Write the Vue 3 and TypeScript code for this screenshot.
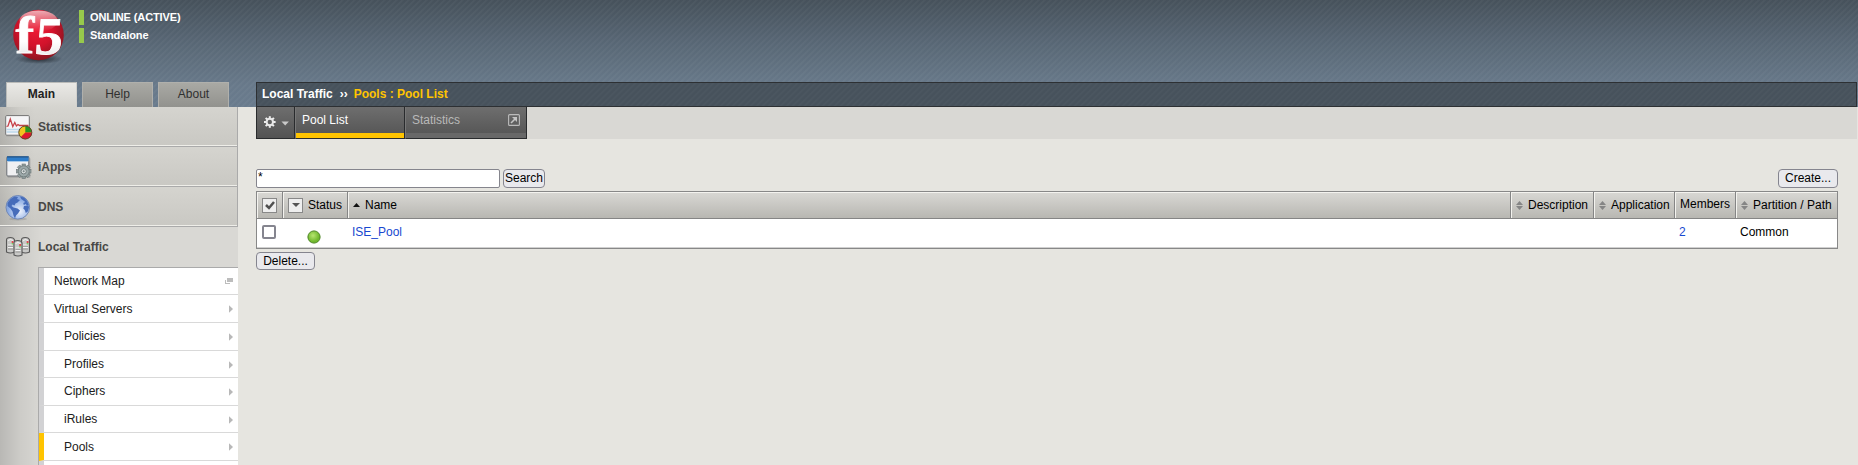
<script setup lang="ts">
interface SubItem { label: string; nested?: boolean; external?: boolean; active?: boolean; raised?: boolean; height: number }

const tabs: string[] = ['Main', 'Help', 'About']
const sections: string[] = ['Statistics', 'iApps', 'DNS', 'Local Traffic']
const subItems: SubItem[] = [
  { label: 'Network Map', external: true, height: 27 },
  { label: 'Virtual Servers', height: 28 },
  { label: 'Policies', nested: true, raised: true, height: 28 },
  { label: 'Profiles', nested: true, height: 27 },
  { label: 'Ciphers', nested: true, raised: true, height: 28 },
  { label: 'iRules', nested: true, height: 27 },
  { label: 'Pools', nested: true, active: true, height: 28 },
  { label: '', height: 28 },
]
const servers = [{ x: 1, y: 1 }, { x: 16, y: 1 }, { x: 8.5, y: 4 }]
const teeth: number[] = [0, 45, 90, 135, 180, 225, 270, 315]
</script>

<template>
  <div class="page">
    <header class="masthead">
      <svg class="logo" width="60" height="60" viewBox="0 0 60 60">
        <defs>
          <radialGradient id="ball" cx="45%" cy="38%" r="62%">
            <stop offset="0" stop-color="#ee1c35" />
            <stop offset=".55" stop-color="#d2122b" />
            <stop offset="1" stop-color="#8d1520" />
          </radialGradient>
          <linearGradient id="shine" x1="0" y1="0" x2="0" y2="1">
            <stop offset="0" stop-color="#fff" stop-opacity=".65" />
            <stop offset="1" stop-color="#fff" stop-opacity="0" />
          </linearGradient>
          <radialGradient id="shade">
            <stop offset="0" stop-color="#20262d" stop-opacity=".9" />
            <stop offset="1" stop-color="#20262d" stop-opacity="0" />
          </radialGradient>
          <linearGradient id="glyph" x1="0" y1="0" x2="0" y2="1">
            <stop offset="0" stop-color="#fff" />
            <stop offset=".6" stop-color="#fff" />
            <stop offset="1" stop-color="#ddd" />
          </linearGradient>
        </defs>
        <ellipse cx="31" cy="54" rx="24" ry="5" fill="url(#shade)" />
        <circle cx="30.5" cy="30" r="25.3" fill="url(#ball)" />
        <ellipse cx="30.5" cy="16" rx="19" ry="10.5" fill="url(#shine)" />
        <text class="logo-glyph" transform="translate(7.5 48) scale(1.08 1)" font-size="52">f</text>
        <text class="logo-glyph" transform="translate(26 48.5) skewX(-5) scale(1.04 1)" font-size="53">5</text>
      </svg>
      <div class="device">
        <div class="state online">ONLINE (ACTIVE)</div>
        <div class="state">Standalone</div>
      </div>
    </header>

    <nav class="tabs">
      <div v-for="(tab, i) in tabs" :key="tab" class="tab" :class="{ current: i === 0 }">{{ tab }}</div>
    </nav>

    <div class="crumbs"><span>Local Traffic</span><span class="sep">››</span><span class="here">Pools : Pool List</span></div>

    <aside class="sidebar">
      <div v-for="(section, i) in sections" :key="section" class="section" :class="{ open: i === 3 }">
        <svg class="section-icon" width="28" height="28" viewBox="0 0 28 28">
          <g v-if="i === 0">
            <rect x="1" y="3" width="24" height="20" rx="1" fill="#a5a5a3" opacity=".5" />
            <rect x=".7" y="1.6" width="23.6" height="19.6" rx="1" fill="#f5f5f7" stroke="#737373" />
            <path d="M1.5 15.5h22M1.5 18h22" stroke="#bcd8ec" stroke-width="1.5" />
            <path d="M1.5 12.5l1.5-.5 2.3-7 2.5 7.5 2-4 1.6 3.5 1.6-1.5 1.5 1h9" fill="none" stroke="#c64149" stroke-width="1.3" />
            <circle cx="20.3" cy="18.5" r="6.7" fill="#f0c420" />
            <path d="M20.3 18.5v-6.7a6.7 6.7 0 0 1 6.7 6.7z" fill="#279521" />
            <path d="M20.3 18.5h6.7a6.7 6.7 0 0 1-11.4 4.7z" fill="#dc1830" />
            <circle cx="20.3" cy="18.5" r="6.5" fill="none" stroke="#5e4931" />
          </g>
          <g v-else-if="i === 1">
            <rect x="2.5" y="4" width="23" height="20" rx="1" fill="#999" opacity=".5" />
            <rect x="1.8" y="2.5" width="22" height="19.5" rx="1" fill="#f0f0f2" stroke="#686d72" />
            <rect x="2" y="2.5" width="21.6" height="4.5" fill="#2e7dca" />
            <path d="M2 3h21.6" stroke="#225384" />
            <path d="M2.5 7.5h20.5" stroke="#a8c9e9" />
            <rect v-for="angle in teeth" :key="angle" x="17" y="10" width="3.4" height="4" fill="#929e9f" stroke="#6a7576" stroke-width=".6" :transform="`rotate(${angle} 18.7 17.3)`" />
            <circle cx="18.7" cy="17.3" r="5.5" fill="#9ca8a9" stroke="#6a7576" stroke-width=".7" />
            <circle cx="18.7" cy="17.3" r="2.6" fill="#d8dddd" stroke="#647071" stroke-width=".8" />
            <circle cx="18.7" cy="17.3" r="1" fill="#7b8788" />
          </g>
          <g v-else-if="i === 2">
            <defs><radialGradient id="globe" cx="58%" cy="66%"><stop offset="0" stop-color="#f0f4fc" /><stop offset="1" stop-color="#88a9e3" /></radialGradient></defs>
            <ellipse cx="13" cy="25" rx="9" ry="1.5" fill="#777" opacity=".3" />
            <circle cx="12.8" cy="13.3" r="11.8" fill="url(#globe)" stroke="#7288b4" />
            <path d="M2.5 9l3-4 4-2.5 3.5.5-1 2 3 1-2.5 2.5-2 1-1 2-2-1-1 1.5 2 1.5 4 1 2.5 2-2 3-2 2-1 3-1.5-3-1-4-2-3-3-2.5zM15 2.5l4 1 3 3.5 1.8 4-2 .5-1-1.5-2 1-.5-2 2-1-2-1.5-2-1.5zM19 12l4.5-.5.5 2-1.2 4-2 1.5-1-3-1.5-1.5z" fill="#466cba" />
          </g>
          <g v-else>
            <g v-for="s in servers" :key="s.x" :transform="`translate(${s.x} ${s.y + 2})`">
              <path d="M.5 3Q.5.5 4.2.5T8.5 3v12Q4.5 17 .5 15z" fill="#c9c9c7" stroke="#575757" stroke-width="1.1" />
              <path d="M2 3.5Q4.5 1.6 7 3.5M2 8h5M2 10.5h5" fill="none" stroke="#f5f5f5" />
              <path d="M2 9.3h5M2 12h5" stroke="#858585" stroke-width=".7" />
              <rect x="5.7" y="4.2" width="1.8" height="1.6" fill="#e52832" />
              <rect x="5.7" y="6.2" width="1.6" height="1.2" fill="#65cc4a" />
            </g>
          </g>
        </svg>
        <span>{{ section }}</span>
      </div>
      <div class="submenu">
        <div v-for="(item, i) in subItems" :key="i" class="subitem" :class="{ nested: item.nested, active: item.active, raised: item.raised }" :style="{ height: item.height + 'px' }">
          <span>{{ item.label }}</span>
          <svg v-if="item.external" class="window" width="8" height="6" viewBox="0 0 8 6"><path d="M2 0h6v4H2zM0 2h1v3h4v1H0z" fill="#bdbdbd" /></svg>
          <svg v-else-if="item.label" class="arrow" width="4" height="8" viewBox="0 0 4 8"><path d="M0 .3L4 4 0 7.7z" fill="#b8b8b8" /></svg>
        </div>
      </div>
    </aside>

    <main class="content">
      <div class="toolband">
        <div class="tool gear">
          <svg width="28" height="14" viewBox="0 0 28 14">
            <g transform="translate(6.8 7)">
              <rect v-for="angle in teeth" :key="angle" x="-1" y="-5.8" width="2" height="3" fill="#eee" :transform="`rotate(${angle})`" />
              <circle r="3.2" fill="none" stroke="#e8e8e8" stroke-width="2" />
            </g>
            <path d="M18.5 6.5h7.4l-3.7 4z" fill="#c9c9c9" />
          </svg>
        </div>
        <div class="tool selected">Pool List</div>
        <div class="tool statistics"><span>Statistics</span>
          <svg width="12" height="12" viewBox="0 0 12 12"><rect x=".6" y=".6" width="10.8" height="10.8" rx="1" fill="none" stroke="#bbb" stroke-width="1.1" /><path d="M3 9l4.5-4.5" stroke="#c5c5c5" stroke-width="1.6" /><path d="M4 3h5v5z" fill="#c5c5c5" /></svg>
        </div>
      </div>

      <div class="actions">
        <div class="search"><input type="text" value="*" aria-label="Search" /><button class="find">Search</button></div>
        <button class="create">Create...</button>
      </div>

      <div class="table">
        <div class="row head">
          <div class="check-cell"><span class="boxed"><svg width="10" height="9" viewBox="0 0 10 9"><path d="M1 4l3 3 5-6" fill="none" stroke="#505050" stroke-width="2.5" /></svg></span></div>
          <div class="status-head"><span class="boxed"><svg width="8" height="4" viewBox="0 0 8 4"><path d="M0 0h8L4 4z" fill="#555" /></svg></span><span>Status</span></div>
          <div class="name-head"><svg width="7" height="4" viewBox="0 0 7 4"><path d="M0 4h7L3.5 0z" fill="#111" /></svg><span>Name</span></div>
          <div v-for="label in ['Description', 'Application', 'Members', 'Partition / Path']" :key="label" class="sortable" :class="{ plain: label === 'Members' }">
            <svg v-if="label !== 'Members'" width="7" height="9" viewBox="0 0 7 9"><path d="M0 4h7L3.5 0zM0 5h7L3.5 9z" fill="#858585" /></svg><span>{{ label }}</span>
          </div>
        </div>
        <div class="row body">
          <div class="pick"><span class="checkbox"></span></div>
          <div class="light"><svg width="14" height="14" viewBox="0 0 14 14"><defs><radialGradient id="green" cx="42%" cy="38%"><stop offset="0" stop-color="#b7e571" /><stop offset="1" stop-color="#70b82d" /></radialGradient></defs><circle cx="7" cy="7" r="6.1" fill="url(#green)" stroke="#4c8523" /></svg></div>
          <div class="name-cell"><a>ISE_Pool</a></div>
          <div></div><div></div>
          <div class="members"><a>2</a></div>
          <div class="path">Common</div>
        </div>
      </div>
      <button class="delete">Delete...</button>
    </main>
  </div>
</template>

<style>
body { margin: 0; overflow: hidden; background: #e6e5e0; }
</style>

<style scoped>
* { box-sizing: border-box; }
.page {
  width: 1858px; height: 465px; overflow: hidden;
  display: grid; grid-template-columns: 238px 18px 1fr; grid-template-rows: 82px 25px 358px;
  font: 12px/14px "Liberation Sans", Arial, sans-serif; color: #000;
  background:
    repeating-linear-gradient(135deg, rgba(255,255,255,.035) 0 1px, rgba(255,255,255,0) 1.8px 3.3px, rgba(255,255,255,.035) 4.243px) 0 0 / 100% 107px no-repeat,
    linear-gradient(#46515b, #586775 40%, #68798a 80%, #697b8d) 0 0 / 100% 107px no-repeat,
    #e6e5e0;
}
.masthead { grid-column: 1 / 4; display: flex; padding: 5px 0 0 8px; }
.logo { flex: none; }
.logo-glyph { font-family: "Liberation Serif", serif; font-weight: bold; fill: url(#glyph); stroke: #fff; stroke-width: .8; }
.device { margin: 5px 0 0 11px; display: flex; flex-direction: column; gap: 3px; }
.state { height: 15px; border-left: 5px solid #97c94c; padding-left: 6px; color: #fff; font-size: 11px; line-height: 14px; font-weight: bold; letter-spacing: -.08px; }
.online { letter-spacing: -.12px; }
.tabs { display: flex; gap: 5px; padding-left: 6px; }
.tab { width: 71px; height: 25px; text-align: center; line-height: 23px; color: #303030; border: 1px solid #b0b0ac; border-bottom: 0; background: linear-gradient(#a9a9a4, #92928e); }
.tab.current { color: #222; font-weight: bold; border-color: #b9bab8 #d2d1cd #d2d1cd #b9bab8; background: linear-gradient(#eae9e6, #d5d4cf); }
.crumbs {
  grid-column: 3; width: 1601px; display: flex; align-items: center; padding: 0 0 1px 5px;
  border: 1px solid #2d3033; color: #fff; font-weight: bold;
  background: repeating-linear-gradient(135deg, rgba(255,255,255,.025) 0 1px, transparent 1.8px 3.3px, rgba(255,255,255,.025) 4.243px), #47525c;
}
.sep { margin: 0 6px 0 7px; }
.here { color: #ffc400; }
.sidebar { width: 238px; height: 358px; background: linear-gradient(90deg, rgba(0,0,0,.15), rgba(0,0,0,.06) 20px, transparent 42px), #d9d8d4; }
.section { height: 40px; display: flex; align-items: center; gap: 5px; padding-left: 5px; font-weight: bold; color: #484846; background: linear-gradient(90deg, rgba(0,0,0,.12), rgba(0,0,0,.03) 20px, transparent 35px), linear-gradient(#d5d4cf, #c9c8c3); border-right: 1px solid #aaa; border-bottom: 1px solid #aaa; box-shadow: inset 0 -1px #efeee9; }
.section.open { background: none; border: 0; box-shadow: none; }
.section-icon { margin-top: 2px; flex: none; }
.submenu { margin-left: 38px; border-top: 1px solid #aaa; border-left: 1px solid #aaa; background: #fff; }
.subitem { display: flex; align-items: center; justify-content: space-between; padding: 0 5px 0 10px; border-left: 5px solid #d2d2d4; border-bottom: 1px solid #d9d9d9; color: #202020; }
.subitem.nested { padding-left: 20px; }
.subitem.raised span { margin-bottom: 2px; }
.subitem.active { border-left-color: #ffc400; }
.arrow { margin-top: 1px; }
.content { grid-column: 3; min-width: 0; }
.toolband { height: 32px; width: 1601px; display: flex; background: #d9d8d4; }
.tool { height: 32px; border-right: 1px solid #292b2d; border-bottom: 1px solid #292b2d; background: linear-gradient(#6e6e6e, #535353); color: #fff; }
.gear { width: 39px; border-left: 1px solid #292b2d; padding: 8px 0 0 6px; }
.selected { width: 110px; padding: 6px 0 0 6px; border-left: 1px solid #777; box-shadow: inset 0 -5px #ffc400; }
.statistics { width: 122px; display: flex; align-items: flex-start; justify-content: space-between; padding: 6px 6px 0 6px; color: #b9b9b9; border-left: 1px solid #777; box-shadow: inset 0 -5px #686868; }
.statistics svg { margin-top: 1px; }
.actions { height: 52px; width: 1582px; padding-top: 30px; display: flex; justify-content: space-between; }
.search { display: flex; gap: 3px; }
input { width: 244px; height: 19px; margin: 0; padding: 0 1px 4px; border: 1px solid #85858d; border-radius: 2px; background: #fff; font: 12px/14px "Liberation Sans", Arial, sans-serif; }
button { display: block; height: 19px; margin: 0; padding: 0; border: 1px solid #85858f; border-radius: 4px; background: #e9e9ed; color: #000; font: 12px/15px "Liberation Sans", Arial, sans-serif; }
.find { width: 42px; }
.create { width: 60px; }
.delete { width: 59px; height: 18px; margin-top: 3px; }
.table { width: 1582px; height: 58px; border: 1px solid #888; background: #fff; box-shadow: inset 0 -1px #d0d0d0; }
.row { display: grid; grid-template-columns: 26px 65px 1163px 83px 81px 61px 101px; }
.head { height: 27px; border-bottom: 1px solid #858585; background: linear-gradient(#d9d8d4, #b8b7b2); }
.head > div { display: flex; align-items: center; border-right: 1px solid #858585; box-shadow: inset 1px 1px #f4f3ef; }
.head > div:last-child { border-right: 0; }
.head svg { flex: none; }
.boxed { width: 15px; height: 15px; display: flex; align-items: center; justify-content: center; border: 1px solid #888; background: #eee; flex: none; }
.check-cell, .status-head, .name-head, .sortable { padding-left: 5px; }
.status-head, .name-head, .sortable { gap: 5px; }
.sortable { white-space: nowrap; }
.head .sortable.plain { padding-bottom: 2px; }
.body { height: 29px; }
.pick { padding: 6px 0 0 5px; }
.checkbox { display: block; width: 14px; height: 14px; border: 2px solid #85858f; border-radius: 2px; background: #fff; }
.light { padding: 11px 0 0 24px; }
.name-cell { padding: 6px 0 0 4px; }
.members, .path { padding: 6px 0 0 4px; }
a { color: #1748d0; }
</style>
